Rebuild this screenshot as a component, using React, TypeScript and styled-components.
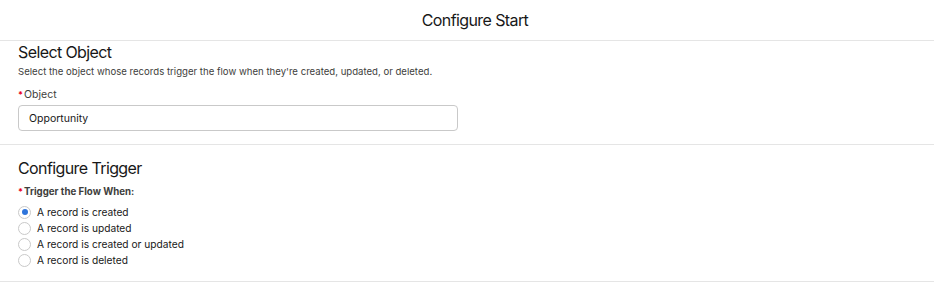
import React from "react";
import styled, { createGlobalStyle } from "styled-components";

const Global = createGlobalStyle`
  html, body { margin: 0; padding: 0; background: #ffffff; }
  body { font-family: Inter, "Noto Sans", "Liberation Sans", sans-serif; color: #181818; }
`;

const Page = styled.div`
  display: flex;
  flex-direction: column;
  width: 934px;
`;

const Header = styled.header`
  height: 41px;
  display: flex;
  align-items: center;
  justify-content: center;
  padding-left: 16px;
  box-sizing: border-box;
  border-bottom: 1px solid #e5e5e5;
`;

const Title = styled.h1`
  margin: 0;
  font-size: 16px;
  letter-spacing: -0.6px;
  font-weight: 400;
  color: #181818;
`;

const Section = styled.section<{ $top: number; $bottom: number }>`
  display: flex;
  flex-direction: column;
  align-items: flex-start;
  padding: ${(p) => p.$top}px 18px ${(p) => p.$bottom}px;
  border-bottom: 1px solid #e5e5e5;
`;

const Heading = styled.h2`
  margin: 0;
  font-size: 16px;
  line-height: 20px;
  letter-spacing: -0.6px;
  font-weight: 400;
  color: #181818;
`;

const Help = styled.p`
  margin: 3px 0 0;
  font-size: 9.6px;
  line-height: 14px;
  color: #3e3e3c;
`;

const Label = styled.label<{ $bold?: boolean; $mt: number }>`
  display: flex;
  align-items: center;
  margin-top: ${(p) => p.$mt}px;
  font-size: ${(p) => (p.$bold ? "9.7px" : "10.5px")};
  line-height: 14px;
  font-weight: ${(p) => (p.$bold ? 700 : 400)};
  color: #3e3e3c;
`;

const Req = styled.abbr`
  color: #ea001e;
  text-decoration: none;
  font-size: 9px;
  font-weight: 700;
  margin-right: 1px;
`;

const Input = styled.div`
  margin-top: 3px;
  width: 440px;
  height: 26px;
  box-sizing: border-box;
  border: 1px solid #c9c9c9;
  border-radius: 4px;
  display: flex;
  align-items: center;
  padding: 0 10px;
  font-size: 10.5px;
  color: #181818;
`;

const RadioList = styled.div`
  display: flex;
  flex-direction: column;
  margin-top: 5px;
`;

const RadioRow = styled.div`
  display: flex;
  align-items: center;
  height: 16px;
  gap: 6px;
  font-size: 10.2px;
  color: #181818;
`;

const Circle = styled.span<{ $checked?: boolean }>`
  width: 13px;
  height: 13px;
  box-sizing: border-box;
  border-radius: 50%;
  border: 1px solid #c9c9c9;
  background: #fff;
  display: flex;
  align-items: center;
  justify-content: center;
  &::after {
    content: "";
    display: ${(p) => (p.$checked ? "block" : "none")};
    width: 6px;
    height: 6px;
    border-radius: 50%;
    background: #2e74db;
  }
`;

const options = [
  "A record is created",
  "A record is updated",
  "A record is created or updated",
  "A record is deleted",
];

export default function App() {
  return (
    <Page>
      <Global />
      <Header>
        <Title>Configure Start</Title>
      </Header>
      <Section $top={1} $bottom={13}>
        <Heading>Select Object</Heading>
        <Help>Select the object whose records trigger the flow when they're created, updated, or deleted.</Help>
        <Label $mt={9}>
          <Req title="required">*</Req>Object
        </Label>
        <Input>Opportunity</Input>
      </Section>
      <Section $top={13} $bottom={13}>
        <Heading>Configure Trigger</Heading>
        <Label $bold $mt={7}>
          <Req title="required">*</Req>Trigger the Flow When:
        </Label>
        <RadioList>
          {options.map((o, i) => (
            <RadioRow key={o}>
              <Circle $checked={i === 0} />
              {o}
            </RadioRow>
          ))}
        </RadioList>
      </Section>
    </Page>
  );
}
